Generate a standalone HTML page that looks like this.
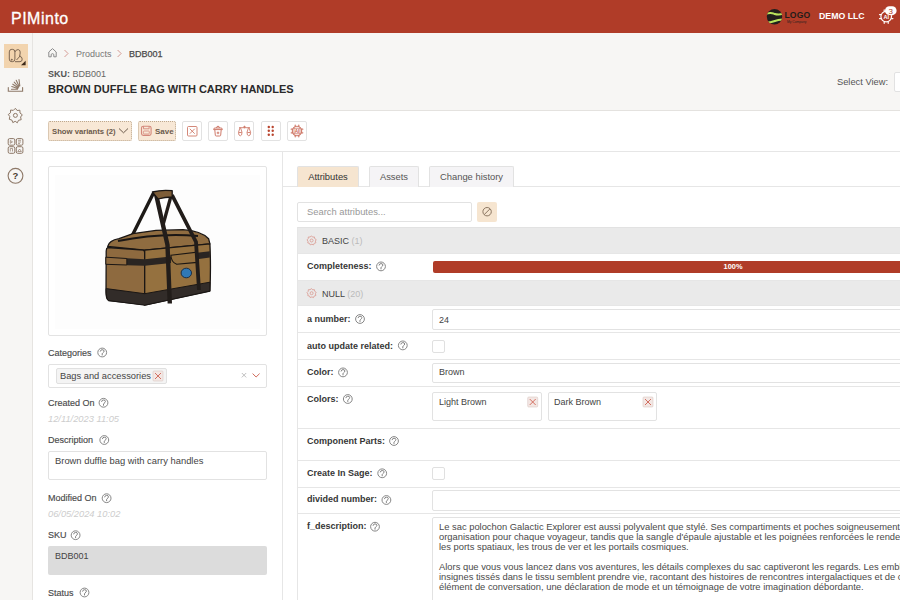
<!DOCTYPE html>
<html><head><meta charset="utf-8">
<style>
*{box-sizing:border-box;margin:0;padding:0}
html,body{width:900px;height:600px;overflow:hidden;background:#fff;font-family:"Liberation Sans",sans-serif;color:#3a3a3a}
.a{position:absolute}
svg{position:absolute;overflow:visible}
#hdr{left:0;top:0;width:900px;height:33px;background:#b03c28}
#brand{left:11px;top:10px;font-size:16px;color:#fff;line-height:18px;letter-spacing:0.5px;-webkit-text-stroke:0.3px #fff}
#side{left:0;top:33px;width:33px;height:567px;background:#f7f6f4;border-right:1px solid #e6e4e1}
#ph{left:33px;top:33px;width:867px;height:78px;background:#f7f6f4;border-bottom:1px solid #e4e2df}
#tb{left:33px;top:111px;width:867px;height:41px;background:#fff;border-bottom:1px solid #e6e6e6}
#lp{left:33px;top:152px;width:250px;height:448px;background:#fff;border-right:1px solid #e6e6e6}
.t9{font-size:9px;line-height:11px}
.lbl{font-size:9px;line-height:11px;color:#4a4a4a;-webkit-text-stroke:0.15px #4a4a4a}
.ib{position:absolute;top:121px;width:20px;height:20px;border:1px solid #e2e2e2;border-radius:2px;background:#fff}
.tab{position:absolute;top:166px;height:21px;border:1px solid #e2e2e2;border-bottom:none;border-radius:2px 2px 0 0;background:#f5f4f6;font-size:9.4px;line-height:20px;color:#555;text-align:center}
.row{position:absolute;left:297px;width:603px;border-bottom:1px solid #e6e6e6;border-left:1px solid #e6e6e6}
.grp{background:#eaeaea}
.rl{position:absolute;left:307px;font-size:9px;line-height:11px;font-weight:bold;color:#363636}
.inp{position:absolute;left:432px;width:480px;border:1px solid #e2e2e2;border-radius:2px;background:#fff;font-size:9px;color:#444}
.cb{position:absolute;left:432px;width:13px;height:13px;border:1px solid #e0e0e0;border-radius:2px;background:#fff}
</style></head>
<body>
<svg width="0" height="0" style="position:absolute">
<defs>
<g id="help"><circle cx="0" cy="0" r="4.4" fill="none" stroke="#808080" stroke-width="0.95"/><path d="M-1.9,-1.3 Q-1.7,-2.8 0,-2.8 Q1.9,-2.8 1.9,-1.4 Q1.9,-0.4 0.5,0.5 L0,1.2 L0,2.5" fill="none" stroke="#7a7a7a" stroke-width="0.95" stroke-linecap="round" stroke-linejoin="round"/></g>
<g id="gear"><path d="M0,-4.6 L1.1,-3.3 L2.8,-3.6 L3.1,-1.9 L4.6,-0.9 L3.8,0.6 L4.3,2.3 L2.6,2.8 L1.9,4.4 L0.3,3.7 L-1.4,4.4 L-2.1,2.8 L-3.8,2.5 L-3.6,0.8 L-4.6,-0.6 L-3.4,-1.8 L-3.3,-3.5 L-1.6,-3.5 Z" fill="none" stroke="#dba097" stroke-width="0.9" stroke-linejoin="round"/><circle cx="0" cy="0" r="1.5" fill="none" stroke="#dba097" stroke-width="0.9"/></g>
<g id="tx"><rect x="-5" y="-5" width="10" height="10" rx="1" fill="#f3e7e4" stroke="#dcc9c4" stroke-width="0.6"/><path d="M-3,-3 L3,3 M3,-3 L-3,3" stroke="#cc5a4a" stroke-width="0.85"/></g>
</defs>
</svg>

<div id="hdr" class="a"></div>
<div id="brand" class="a">PIMinto</div>
<div id="side" class="a"></div>
<div id="ph" class="a"></div>
<div id="tb" class="a"></div>
<div id="lp" class="a"></div>

<!-- sidebar -->
<div class="a" style="left:3.5px;top:43.5px;width:24.5px;height:24.5px;background:#f2d4ae"></div>
<svg style="left:0;top:0" width="33" height="200">
 <g fill="none" stroke="#6e5a48" stroke-width="0.9">
  <rect x="9.3" y="49.3" width="5.6" height="12.4" rx="2.6"/>
  <path d="M14.9,52 Q16,49.3 18.3,49.6 Q20.6,50.1 20.2,53 L19.6,56.3 M15,61.7 L20,61.7 Q22.4,61.5 22.2,59 Q22,56.5 19.6,56.3 M16.5,60 L20.3,55.8"/>
  <circle cx="11.8" cy="59.7" r="0.5" fill="#6e5a48"/>
 </g>
 <path d="M21,65.3 L25.6,60.7 L25.6,65.3 Z" fill="#3d2a1a"/>
 <g fill="none" stroke="#8e7968" stroke-width="1.1" stroke-linecap="round">
  <path d="M8.3,87.5 L8.3,91.3 L22.6,91.3 L22.6,87.5"/>
  <path d="M11.5,89.3 L17.5,89.3 M11.8,86.5 L17.8,88.6 M12.8,84.2 L18.2,87.8 M14.2,82.2 L18.6,87 M16.2,80.3 L19.1,86.3 M19,79.5 L19.8,85.7"/>
 </g>
 <g fill="none" stroke="#8e7968" stroke-width="1">
  <path d="M15.4,108.3 L17.1,110.5 L19.9,110.2 L20,113 L22.3,114.8 L20.6,117 L21.2,119.7 L18.5,120.3 L17.3,122.8 L15.2,121.3 L12.8,122.6 L11.9,120.1 L9.3,119.3 L9.8,116.6 L8.3,114.5 L10.5,112.8 L10.6,110 L13.3,110.4 Z" stroke-linejoin="round"/>
  <circle cx="15.4" cy="115.4" r="2"/>
  <rect x="8.2" y="138.6" width="6.6" height="6.6" rx="1.4"/>
  <rect x="16.3" y="138.6" width="6.6" height="6.6" rx="1.4"/>
  <rect x="8.2" y="146.7" width="6.6" height="6.6" rx="1.4"/>
  <rect x="16.3" y="146.7" width="6.6" height="6.6" rx="1.4"/>
  <circle cx="15.5" cy="175.8" r="7.4" stroke-width="1.1"/>
 </g>
 <g fill="none" stroke="#8e7968" stroke-width="0.7">
  <path d="M10.3,140.5 L12.5,141.9 L10.3,143.3 Z M18,140.3 L21,140.3 M18,142 L21,142 M18,143.6 L20,143.6 M10.3,151.5 L10.3,148.5 L12.5,148.5 L12.5,151.5 M17.8,151.5 L19.6,149 L21.4,151.5 Z"/>
 </g>
 <text x="15.5" y="179.3" font-family="Liberation Sans" font-weight="bold" font-size="9.5" fill="#4a3a2e" text-anchor="middle">?</text>
</svg>

<!-- header right -->
<svg style="left:760px;top:0" width="140" height="33">
 <defs><clipPath id="lc"><circle cx="14.5" cy="16.7" r="7.7"/></clipPath></defs>
 <circle cx="14.5" cy="16.7" r="7.7" fill="#211f1d"/>
 <g clip-path="url(#lc)" fill="none" stroke="#b9e35c" stroke-width="2">
  <path d="M5,14.2 Q10,12 14,13.7 Q19,15.5 24,13.4"/>
  <path d="M5,22.5 Q10,22.8 14,21.2 Q19,19.2 24,19.5"/>
 </g>
 <text x="24.5" y="17.8" font-family="Liberation Sans" font-weight="bold" font-size="8.6" fill="#231c1a" letter-spacing="0.1">LOGO</text>
 <text x="27" y="23" font-family="Liberation Sans" font-size="3.3" fill="#2a2220">My Company</text>
 <g fill="none" stroke="#fff" stroke-width="1.2">
  <circle cx="126.2" cy="16.6" r="5.3"/>
  <path d="M124.2,9.9 L124.2,11.2 M128.2,9.9 L128.2,11.2 M124.2,22 L124.2,23.3 M128.2,22 L128.2,23.3 M119.5,14.6 L120.8,14.6 M119.5,18.6 L120.8,18.6 M131.6,14.6 L132.9,14.6 M131.6,18.6 L132.9,18.6" stroke-linecap="round"/>
 </g>
 <text x="126.2" y="19.2" font-family="Liberation Sans" font-weight="bold" font-size="5.6" fill="#fff" text-anchor="middle">AI</text>
 <rect x="125" y="6.3" width="11.6" height="8.8" rx="4.4" fill="#fff"/>
 <text x="130.8" y="13.8" font-family="Liberation Sans" font-size="8" fill="#b03c28" text-anchor="middle">3</text>
</svg>
<div class="a" style="left:819px;top:11px;font-size:8.75px;line-height:11px;color:#fff;font-weight:bold">DEMO LLC</div>

<!-- breadcrumb -->
<svg style="left:40px;top:40px" width="100" height="25">
 <path d="M8.8,16.8 L8.8,12 L12.5,8.6 L16.2,12 L16.2,16.8 L13.8,16.8 L13.8,14.3 Q12.5,13 11.2,14.3 L11.2,16.8 Z" fill="none" stroke="#8a8a8a" stroke-width="1" stroke-linejoin="round"/>
 <path d="M24.5,10 L28,13.5 L24.5,17" fill="none" stroke="#d09088" stroke-width="0.9"/>
 <path d="M77.6,10 L81.1,13.5 L77.6,17" fill="none" stroke="#d09088" stroke-width="0.9"/>
</svg>
<div class="a t9" style="left:76px;top:49px;color:#777">Products</div>
<div class="a t9" style="left:129px;top:49px;color:#4a4a4a;-webkit-text-stroke:0.25px #4a4a4a">BDB001</div>
<div class="a t9" style="left:48px;top:69px;color:#666"><b style="color:#555">SKU:</b> BDB001</div>
<div class="a" style="left:48px;top:83px;font-size:11px;line-height:13px;font-weight:bold;color:#2a2a2a">BROWN DUFFLE BAG WITH CARRY HANDLES</div>
<div class="a t9" style="left:837px;top:77px;color:#555;font-size:9.3px">Select View:</div>
<div class="a" style="left:894px;top:72px;width:20px;height:20px;background:#fff;border:1px solid #e2e2e2;border-radius:2px"></div>

<!-- toolbar -->
<div class="a" style="left:48px;top:121px;width:84px;height:20px;background:#f8e8d6;border:1px dotted #bda88e;border-radius:2px"></div>
<div class="a" style="left:52px;top:127px;font-size:7.7px;line-height:10px;font-weight:bold;color:#6b5a4b">Show variants (2)</div>
<svg style="left:118px;top:127px" width="12" height="8"><path d="M1,1.5 L5.5,5.8 L10,1.5" fill="none" stroke="#6b5a4b" stroke-width="1"/></svg>
<div class="a" style="left:138px;top:121px;width:38px;height:20px;background:#f8e8d6;border:1px dotted #bda88e;border-radius:2px"></div>
<svg style="left:140px;top:124px" width="14" height="14">
 <rect x="1.5" y="2.2" width="9.6" height="9.2" rx="1.8" fill="none" stroke="#d4877a" stroke-width="1.1"/>
 <path d="M3.5,2.2 L3.5,4.8 L9.1,4.8 L9.1,2.2" fill="none" stroke="#d4877a" stroke-width="0.9"/>
 <rect x="3.3" y="7" width="6" height="3" rx="0.8" fill="none" stroke="#d4877a" stroke-width="0.8"/>
</svg>
<div class="a" style="left:155px;top:127px;font-size:8px;line-height:10px;font-weight:bold;color:#6b5a4b">Save</div>
<div class="ib" style="left:182px"></div>
<div class="ib" style="left:208px"></div>
<div class="ib" style="left:234px"></div>
<div class="ib" style="left:261px"></div>
<div class="ib" style="left:287px"></div>
<svg style="left:180px;top:119px" width="130" height="24">
 <g fill="none" stroke="#cf7a6a" stroke-width="0.9">
  <rect x="7.5" y="7.5" width="9.5" height="9.5" rx="1"/>
  <path d="M9.8,9.8 L14.7,14.7 M14.7,9.8 L9.8,14.7"/>
  <path d="M33.6,10.6 Q33.6,9 35,9 L41,9 Q42.4,9 42.4,10.6 Z M36.6,9 Q36.6,7.2 38,7.2 Q39.4,7.2 39.4,9 M34.8,10.8 L35.3,16.2 Q35.4,17 36.3,17 L39.7,17 Q40.6,17 40.7,16.2 L41.2,10.8 M38,12.6 L38,15.2 M36.7,13.9 L39.3,13.9" stroke-width="1"/>
  <path d="M59,8.7 L70,8.7 M64.5,7 L64.5,8.7 M60,8.7 L58.5,13.3 Q58.5,16.8 60.3,16.8 Q62,16.8 62,13.3 L60.5,8.7 M68.5,8.7 L67,13.3 Q67,16.8 68.8,16.8 Q70.6,16.8 70.6,13.3 L69,8.7 M58.8,13.5 L61.8,13.5 M67.3,13.5 L70.3,13.5"/>
  <circle cx="64.5" cy="8" r="0.8"/>
  <circle cx="117" cy="12" r="4.7" stroke-width="1.1"/>
  <path d="M115.2,6.2 L115.2,7.4 M118.8,6.2 L118.8,7.4 M115.2,16.6 L115.2,17.8 M118.8,16.6 L118.8,17.8 M111.2,10.2 L112.4,10.2 M111.2,13.8 L112.4,13.8 M121.6,10.2 L122.8,10.2 M121.6,13.8 L122.8,13.8" stroke-width="1.2" stroke-linecap="round"/>
  <rect x="114" y="9.2" width="6" height="5.6" fill="#fff" stroke-width="0.8"/>
 </g>
 <g fill="#b9452f">
  <circle cx="88.8" cy="8" r="1.2"/><circle cx="92.7" cy="8" r="1.2"/>
  <circle cx="88.8" cy="11.7" r="1.2"/><circle cx="92.7" cy="11.7" r="1.2"/>
  <circle cx="88.8" cy="15.8" r="1.2"/><circle cx="92.7" cy="15.8" r="1.2"/>
 </g>
 <text x="117" y="14" font-family="Liberation Sans" font-weight="bold" font-size="4.6" fill="#c9604c" text-anchor="middle">AI</text>
</svg>

<!-- left panel -->
<div class="a" style="left:48px;top:166px;width:219px;height:170px;border:1px solid #e3e3e3;border-radius:2px"></div>
<div class="a" style="left:55px;top:175px;width:205px;height:154px;background:#fdfdfd"></div>
<svg style="left:95px;top:180px" width="130" height="135" viewBox="95 180 130 135">
 <path d="M153,194 L132,236" stroke="#1e1a17" stroke-width="3.4" fill="none" stroke-linecap="round"/>
 <path d="M107.7,246.5 Q109,240.5 119,238.7 L133,233.6 L156,230.4 L183,229.7 Q201,231 208.6,238.7 L209.9,243.8 L144.7,250.2 Z" fill="#8f6c40" stroke="#1a1614" stroke-width="1.3" stroke-linejoin="round"/>
 <path d="M118,241 Q160,232.5 198,236" stroke="#1a1614" stroke-width="1.8" fill="none"/>
 <path d="M107.7,247.5 L143.4,250.2 Q144.7,251 144.7,253 L144.7,304.5 L108.5,300.5 Q106,299 106,292 L106.2,251 Q106.3,248 107.7,247.5 Z" fill="#8e6a3f" stroke="#1a1614" stroke-width="1.3" stroke-linejoin="round"/>
 <path d="M144.7,250.2 L209.9,243.8 Q211,267 209.9,291 L144.7,305.2 Z" fill="#95713f" stroke="#1a1614" stroke-width="1.3" stroke-linejoin="round"/>
 <path d="M106.1,288.6 L144.7,293.7 L209.9,282.2 L209.9,291 L144.7,305.2 L108.5,300.5 Q106,299 106.1,288.6 Z" fill="#322c29" stroke="#1a1614" stroke-width="1"/>
 <path d="M126.8,258.3 L144.7,259.2 L171,256.6 L171,263 L144.7,265.8 L126.8,265.2 Z" fill="#2a2522"/>
 <path d="M197,252.8 L209.9,251.3 L209.9,257.6 L197,259.2 Z" fill="#2a2522"/>
 <path d="M105.8,257.2 L126.8,258.5 L126.8,265 L105.8,264.3 Z" fill="#8f6b40" stroke="#1a1614" stroke-width="1"/>
 <path d="M170.9,255.3 L197.1,252.1 L197.1,262.4 L176.7,264.3 Q171,262 170.9,255.3 Z" fill="#93703f" stroke="#1a1614" stroke-width="1.1"/>
 <path d="M156,194 L167.5,245 L169.8,303.5" stroke="#221d1a" stroke-width="4.4" fill="none"/>
 <path d="M171,196 L163,225" stroke="#221d1a" stroke-width="3.3" fill="none"/>
 <path d="M172,195 L196,242 L199,290" stroke="#221d1a" stroke-width="3.8" fill="none"/>
 <path d="M152.4,192 Q162,189.5 172.2,190.7 L172.2,197 Q165,197 158,199 Z" fill="#7d5d38" stroke="#1a1614" stroke-width="1.3" stroke-linejoin="round"/>
 <ellipse cx="186.3" cy="273" rx="5.2" ry="4.8" fill="#2f78b5" stroke="#1b2f45" stroke-width="1"/>
</svg>

<div class="a lbl" style="left:48px;top:348px">Categories</div>
<div class="a" style="left:48px;top:364px;width:219px;height:24px;border:1px solid #e2e2e2;border-radius:2px"></div>
<div class="a" style="left:56px;top:368px;width:111px;height:16px;border:1px solid #e0e0e0;border-radius:2px;background:#f4f4f4"></div>
<div class="a t9" style="left:60px;top:371px;color:#444;font-size:9.3px">Bags and accessories</div>
<svg style="left:0;top:0" width="300" height="600">
 <use href="#tx" x="158" y="376"/>
 <path d="M241.8,373 L246.2,377.4 M246.2,373 L241.8,377.4" stroke="#b8b8b8" stroke-width="0.9"/>
 <path d="M252.6,373.6 L256.1,377 L259.6,373.6" fill="none" stroke="#d06a5a" stroke-width="1"/>
 <use href="#help" x="102.2" y="352.5"/>
 <use href="#help" x="103.5" y="402.8"/>
 <use href="#help" x="104.3" y="440"/>
 <use href="#help" x="106.6" y="498.2"/>
 <use href="#help" x="75.6" y="535.2"/>
 <use href="#help" x="84.5" y="592.5"/>
</svg>
<div class="a lbl" style="left:48px;top:398px">Created On</div>
<div class="a t9" style="left:48px;top:414px;color:#cdcdcd;font-style:italic;font-size:9.3px">12/11/2023 11:05</div>
<div class="a lbl" style="left:48px;top:435.3px">Description</div>
<div class="a" style="left:48px;top:451px;width:219px;height:29px;border:1px solid #e2e2e2;border-radius:2px"></div>
<div class="a t9" style="left:55px;top:455px;color:#444;font-size:9.4px">Brown duffle bag with carry handles</div>
<div class="a lbl" style="left:48px;top:493px">Modified On</div>
<div class="a t9" style="left:48px;top:509px;color:#cdcdcd;font-style:italic;font-size:9.3px">06/05/2024 10:02</div>
<div class="a lbl" style="left:48px;top:530px">SKU</div>
<div class="a" style="left:48px;top:546px;width:219px;height:29px;background:#dcdcdc;border-radius:2px"></div>
<div class="a t9" style="left:55px;top:551px;color:#444">BDB001</div>
<div class="a lbl" style="left:48px;top:588px">Status</div>

<!-- right panel -->
<div class="a" style="left:283px;top:186px;width:617px;height:1px;background:#e6e6e6"></div>
<div class="tab" style="left:297px;width:62px;background:#f6e5d0;color:#333">Attributes</div>
<div class="tab" style="left:369px;width:50px">Assets</div>
<div class="tab" style="left:429px;width:85px">Change history</div>
<div class="a" style="left:297px;top:202px;width:175px;height:20px;border:1px solid #e2e2e2;border-radius:2px"></div>
<div class="a t9" style="left:307px;top:206px;color:#999;font-size:9.4px">Search attributes...</div>
<div class="a" style="left:477px;top:202px;width:20px;height:20px;border-radius:2px;background:#f6e5d0"></div>

<div class="row grp" style="top:227px;height:27px;border-top:1px solid #e2e2e2"></div>
<div class="row" style="top:254px;height:27px"></div>
<div class="row grp" style="top:281px;height:25px"></div>
<div class="row" style="top:306px;height:27px"></div>
<div class="row" style="top:333px;height:27px"></div>
<div class="row" style="top:360px;height:27px"></div>
<div class="row" style="top:387px;height:42px"></div>
<div class="row" style="top:429px;height:32px"></div>
<div class="row" style="top:461px;height:27px"></div>
<div class="row" style="top:488px;height:26px"></div>
<div class="row" style="top:514px;height:100px"></div>

<div class="a t9" style="left:322px;top:236px;color:#444">BASIC <span style="color:#bbb">(1)</span></div>
<div class="rl" style="top:261px">Completeness:</div>
<div class="a" style="left:433px;top:261px;width:470px;height:12px;background:#b03c28;border-radius:2px"></div>
<div class="a" style="left:712px;top:262px;width:42px;text-align:center;font-size:7.4px;line-height:10px;color:#fff;font-weight:bold">100%</div>
<div class="a t9" style="left:322px;top:289px;color:#444">NULL <span style="color:#bbb">(20)</span></div>
<div class="rl" style="top:314px">a number:</div>
<div class="inp" style="top:309px;height:21px"></div>
<div class="a t9" style="left:439px;top:315px;color:#444">24</div>
<div class="rl" style="top:341px">auto update related:</div>
<div class="cb" style="top:340px"></div>
<div class="rl" style="top:367px">Color:</div>
<div class="inp" style="top:363px;height:20px"></div>
<div class="a t9" style="left:439px;top:367px;color:#444">Brown</div>
<div class="rl" style="top:394px">Colors:</div>
<div class="a" style="left:432px;top:392px;width:110px;height:29px;border:1px solid #e2e2e2;border-radius:2px"></div>
<div class="a t9" style="left:439px;top:397px;color:#444">Light Brown</div>
<div class="a" style="left:548px;top:392px;width:109px;height:29px;border:1px solid #e2e2e2;border-radius:2px"></div>
<div class="a t9" style="left:554px;top:397px;color:#444">Dark Brown</div>
<div class="rl" style="top:436px">Component Parts:</div>
<div class="rl" style="top:468px">Create In Sage:</div>
<div class="cb" style="top:467px"></div>
<div class="rl" style="top:494px">divided number:</div>
<div class="inp" style="top:490px;height:21px"></div>
<div class="rl" style="top:521px">f_description:</div>
<div class="inp" style="top:517px;height:100px"></div>
<div class="a" style="left:439px;top:522px;width:520px;font-size:9.37px;line-height:10px;color:#4a4a4a;white-space:nowrap">Le sac polochon Galactic Explorer est aussi polyvalent que stylé. Ses compartiments et poches soigneusement<br>organisation pour chaque voyageur, tandis que la sangle d'épaule ajustable et les poignées renforcées le render<br>les ports spatiaux, les trous de ver et les portails cosmiques.<br><br>Alors que vous vous lancez dans vos aventures, les détails complexes du sac captiveront les regards. Les emblè<br>insignes tissés dans le tissu semblent prendre vie, racontant des histoires de rencontres intergalactiques et de c<br>élément de conversation, une déclaration de mode et un témoignage de votre imagination débordante.</div>

<svg style="left:0;top:0" width="900" height="600">
 <use href="#gear" x="311.6" y="240.5"/>
 <use href="#gear" x="311.6" y="293.2"/>
 <g fill="none" stroke="#8a7560" stroke-width="1"><circle cx="487.1" cy="211.7" r="4.2"/><path d="M484.2,214.6 L490,208.8"/></g>
 <use href="#help" x="381" y="266.4"/>
 <use href="#help" x="360" y="319"/>
 <use href="#help" x="402.8" y="345.4"/>
 <use href="#help" x="343" y="372.4"/>
 <use href="#help" x="347.8" y="399"/>
 <use href="#help" x="394" y="441"/>
 <use href="#help" x="382.2" y="473.3"/>
 <use href="#help" x="386.4" y="500"/>
 <use href="#help" x="375" y="526.7"/>
 <use href="#tx" x="532.7" y="402"/>
 <use href="#tx" x="648" y="402"/>
</svg>
</body></html>
